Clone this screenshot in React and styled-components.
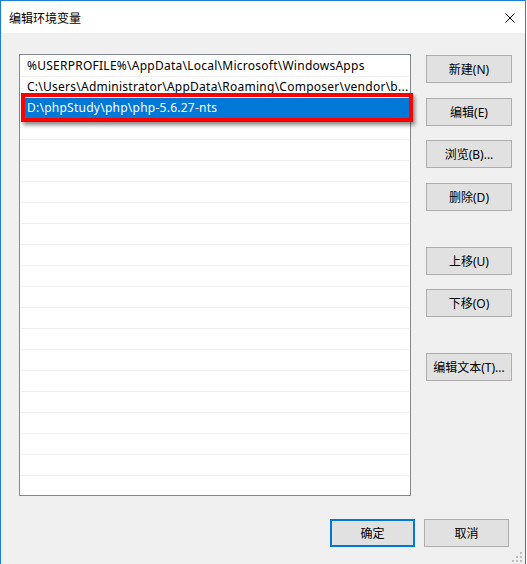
import React from 'react'
import styled, { createGlobalStyle } from 'styled-components'

const paths = [
  '%USERPROFILE%\\AppData\\Local\\Microsoft\\WindowsApps',
  'C:\\Users\\Administrator\\AppData\\Roaming\\Composer\\vendor\\b...',
  'D:\\phpStudy\\php\\php-5.6.27-nts',
]

const sideButtons = [
  { label: '新建(N)', gap: 1 },
  { label: '编辑(E)', gap: 15 },
  { label: '浏览(B)...', gap: 14 },
  { label: '删除(D)', gap: 15 },
  { label: '上移(U)', gap: 36 },
  { label: '下移(O)', gap: 14 },
  { label: '编辑文本(T)...', gap: 36 },
]

const App = () => {
  const rows = Array.from({ length: 21 }, (_, i) => paths[i] || '')
  return (
    <>
      <GlobalStyle />
      <Window>
        <TitleBar>
          <Title>编辑环境变量</Title>
          <Close>
            <svg width='10' height='10' viewBox='0 0 10 10'>
              <path d='M0.5 0.5 L9.5 9.5 M9.5 0.5 L0.5 9.5' stroke='#000' strokeWidth='1' />
            </svg>
          </Close>
        </TitleBar>
        <Body>
          <Main>
            <ListFrame>
              <ListBox>
                {rows.map((text, i) => (
                  <Row key={i} $selected={i === 2}>
                    {text}
                  </Row>
                ))}
              </ListBox>
              <Highlight />
            </ListFrame>
            <SideColumn>
              {sideButtons.map((b) => (
                <SideButton key={b.label} $gap={b.gap}>
                  {b.label}
                </SideButton>
              ))}
            </SideColumn>
          </Main>
          <Footer>
            <FooterButton $primary>确定</FooterButton>
            <FooterButton>取消</FooterButton>
          </Footer>
          <Grip>
            <svg width='10' height='10' viewBox='0 0 10 10'>
              <rect x='8' y='0' width='2' height='2' fill='#bdbdbd' />
              <rect x='4' y='4' width='2' height='2' fill='#bdbdbd' />
              <rect x='8' y='4' width='2' height='2' fill='#bdbdbd' />
              <rect x='0' y='8' width='2' height='2' fill='#bdbdbd' />
              <rect x='4' y='8' width='2' height='2' fill='#bdbdbd' />
              <rect x='8' y='8' width='2' height='2' fill='#bdbdbd' />
            </svg>
          </Grip>
        </Body>
      </Window>
    </>
  )
}

export default App

const GlobalStyle = createGlobalStyle`
  html, body {
    margin: 0;
    padding: 0;
    background: #ffffff;
  }
  body {
    font-family: "Noto Sans", "Noto Sans CJK SC", sans-serif;
    font-size: 12px;
    color: #000;
  }
`
const Window = styled.div`
  position: relative;
  width: 526px;
  height: 564px;
  box-sizing: border-box;
  border: 1px solid #1a7fd6;
  border-bottom: none;
  display: flex;
  flex-direction: column;
  background: #f0f0f0;
  overflow: hidden;
`
const TitleBar = styled.div`
  height: 32px;
  flex-shrink: 0;
  background: #ffffff;
  display: flex;
  align-items: center;
  justify-content: space-between;
  padding: 0 9px 0 8px;
`
const Title = styled.div`
  font-family: "Noto Sans CJK SC", sans-serif;
  font-size: 12px;
  padding-top: 1px;
`
const Close = styled.div`
  width: 10px;
  height: 10px;
  display: flex;
  margin-top: 1px;
  margin-right: 1px;
`
const Body = styled.div`
  position: relative;
  flex: 1;
  display: flex;
  flex-direction: column;
  padding: 21px 13px 0 18px;
`
const Main = styled.div`
  display: flex;
  gap: 15px;
`
const ListFrame = styled.div`
  position: relative;
  width: 392px;
  height: 442px;
`
const ListBox = styled.div`
  width: 100%;
  height: 100%;
  box-sizing: border-box;
  border: 1px solid #828790;
  background: #ffffff;
  padding: 1px 1px 0 1px;
  overflow: hidden;
`
const Row = styled.div`
  height: 20px;
  line-height: 20px;
  border-bottom: 1px solid #f0f0f0;
  padding: 0 2px 0 6px;
  letter-spacing: 0.25px;
  white-space: nowrap;
  overflow: hidden;
  background: ${(p) => (p.$selected ? '#0078d7' : 'transparent')};
  color: ${(p) => (p.$selected ? '#ffffff' : '#000000')};
`
const Highlight = styled.div`
  position: absolute;
  left: 2px;
  top: 39px;
  width: 392px;
  height: 29px;
  box-sizing: border-box;
  border: 4px solid #ff0000;
  box-shadow: 2px 3px 4px rgba(0, 0, 0, 0.45);
  pointer-events: none;
`
const SideColumn = styled.div`
  display: flex;
  flex-direction: column;
`
const SideButton = styled.button`
  width: 86px;
  height: 28px;
  margin-top: ${(p) => p.$gap}px;
  box-sizing: border-box;
  border: 1px solid #adadad;
  background: #e1e1e1;
  font-family: "Noto Sans", "Noto Sans CJK SC", sans-serif;
  font-size: 12px;
  color: #000;
  padding: 0;
`
const Footer = styled.div`
  display: flex;
  justify-content: flex-end;
  gap: 9px;
  margin-top: 23px;
  padding-right: 3px;
`
const FooterButton = styled.button`
  width: 85px;
  height: 28px;
  box-sizing: border-box;
  border: ${(p) => (p.$primary ? '2px solid #0078d7' : '1px solid #adadad')};
  background: #e1e1e1;
  font-family: "Noto Sans", "Noto Sans CJK SC", sans-serif;
  font-size: 12px;
  color: #000;
  padding: 0;
`
const Grip = styled.div`
  position: absolute;
  right: 3px;
  bottom: 2px;
  display: flex;
`
